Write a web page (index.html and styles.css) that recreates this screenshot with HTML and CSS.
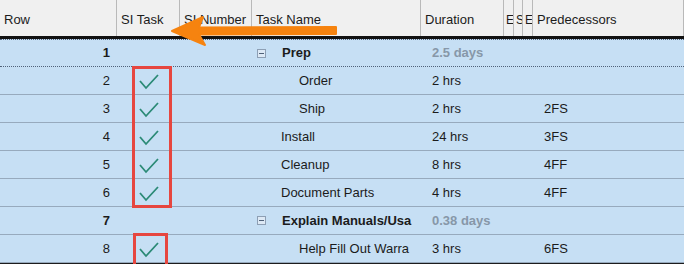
FILE: index.html
```html
<!DOCTYPE html>
<html lang="en">
<head>
    <meta charset="UTF-8">
    <title>Task Grid</title>
    <link rel="stylesheet" href="styles.css">
</head>
<body>
    <div class="sheet">
        <div class="cols head">
            <div class="cell">Row</div>
            <div class="cell">SI Task</div>
            <div class="cell">SI Number</div>
            <div class="cell">Task Name</div>
            <div class="cell">Duration</div>
            <div class="cell narrow">E</div>
            <div class="cell narrow">S</div>
            <div class="cell narrow">E</div>
            <div class="cell">Predecessors</div>
        </div>

        <div class="cols row summary first">
            <div class="cell num">1</div>
            <div class="cell"></div>
            <div class="cell"></div>
            <div class="cell name"><span class="toggle"></span>Prep</div>
            <div class="cell dur grey">2.5 days</div>
            <div class="cell"></div><div class="cell"></div><div class="cell"></div>
            <div class="cell pred"></div>
        </div>
        <div class="cols row">
            <div class="cell num">2</div>
            <div class="cell check"><svg width="22" height="18" viewBox="0 0 22 18"><polyline points="2,9 8,16 20,3"/></svg></div>
            <div class="cell"></div>
            <div class="cell name lvl2">Order</div>
            <div class="cell dur">2 hrs</div>
            <div class="cell"></div><div class="cell"></div><div class="cell"></div>
            <div class="cell pred"></div>
        </div>
        <div class="cols row">
            <div class="cell num">3</div>
            <div class="cell check"><svg width="22" height="18" viewBox="0 0 22 18"><polyline points="2,9 8,16 20,3"/></svg></div>
            <div class="cell"></div>
            <div class="cell name lvl2">Ship</div>
            <div class="cell dur">2 hrs</div>
            <div class="cell"></div><div class="cell"></div><div class="cell"></div>
            <div class="cell pred">2FS</div>
        </div>
        <div class="cols row">
            <div class="cell num">4</div>
            <div class="cell check"><svg width="22" height="18" viewBox="0 0 22 18"><polyline points="2,9 8,16 20,3"/></svg></div>
            <div class="cell"></div>
            <div class="cell name lvl1">Install</div>
            <div class="cell dur">24 hrs</div>
            <div class="cell"></div><div class="cell"></div><div class="cell"></div>
            <div class="cell pred">3FS</div>
        </div>
        <div class="cols row">
            <div class="cell num">5</div>
            <div class="cell check"><svg width="22" height="18" viewBox="0 0 22 18"><polyline points="2,9 8,16 20,3"/></svg></div>
            <div class="cell"></div>
            <div class="cell name lvl1">Cleanup</div>
            <div class="cell dur">8 hrs</div>
            <div class="cell"></div><div class="cell"></div><div class="cell"></div>
            <div class="cell pred">4FF</div>
        </div>
        <div class="cols row">
            <div class="cell num">6</div>
            <div class="cell check"><svg width="22" height="18" viewBox="0 0 22 18"><polyline points="2,9 8,16 20,3"/></svg></div>
            <div class="cell"></div>
            <div class="cell name lvl1">Document Parts</div>
            <div class="cell dur">4 hrs</div>
            <div class="cell"></div><div class="cell"></div><div class="cell"></div>
            <div class="cell pred">4FF</div>
        </div>
        <div class="cols row summary">
            <div class="cell num">7</div>
            <div class="cell"></div>
            <div class="cell"></div>
            <div class="cell name"><span class="toggle"></span>Explain Manuals/Usa</div>
            <div class="cell dur grey">0.38 days</div>
            <div class="cell"></div><div class="cell"></div><div class="cell"></div>
            <div class="cell pred"></div>
        </div>
        <div class="cols row">
            <div class="cell num">8</div>
            <div class="cell check"><svg width="22" height="18" viewBox="0 0 22 18"><polyline points="2,9 8,16 20,3"/></svg></div>
            <div class="cell"></div>
            <div class="cell name lvl2">Help Fill Out Warra</div>
            <div class="cell dur">3 hrs</div>
            <div class="cell"></div><div class="cell"></div><div class="cell"></div>
            <div class="cell pred">6FS</div>
        </div>

        <!-- annotations -->
        <div class="mark mark-big"></div>
        <div class="mark mark-small"></div>
        <svg class="arrow" width="684" height="60" viewBox="0 0 684 60">
            <path d="M172,31 L203,17 L199,27.5 L336,27 L336,34 L199,34.5 L205,45 Z"/>
        </svg>
    </div>
</body>
</html>
```

FILE: styles.css
```css
body {
    margin: 0;
    background: #1c1c1c;
    width: 684px;
    height: 264px;
    overflow: hidden;
}

.sheet {
    position: relative;
    font-family: "Liberation Sans", Arial, sans-serif;
    font-size: 13px;
    color: #1b1b1b;
}

.cols {
    display: grid;
    grid-template-columns: 117px 63px 72px 169px 83px 10px 9px 10px 151px;
}

.cell {
    box-sizing: border-box;
    white-space: nowrap;
    overflow: hidden;
}

.head {
    height: 39px;
    background: #f0f0f0;
    border-bottom: 3px solid #111;
    box-sizing: border-box;
}

.head .cell {
    border-right: 1px solid #b9b9b9;
    padding-left: 4px;
    padding-top: 2px;
    line-height: 36px;
}

.head .narrow {
    padding-left: 2px;
    font-size: 12px;
}

.row {
    height: 28px;
    box-sizing: border-box;
    background: #c6dff4;
    border-bottom: 1px solid #97aabd;
}

.row.first {
    border-top: 1px dotted #50627a;
    border-bottom: 1px dotted #50627a;
}

.row .cell {
    line-height: 27px;
}

.row.first .cell {
    line-height: 26px;
}

.num {
    text-align: right;
    padding-right: 7px;
}

.summary .num,
.summary .name {
    font-weight: bold;
}

.name {
    padding-left: 30px;
    padding-right: 4px;
    position: relative;
}

.name.lvl1 {
    padding-left: 29px;
}

.name.lvl2 {
    padding-left: 47px;
}

.toggle {
    position: absolute;
    left: 5px;
    top: 9px;
    width: 9px;
    height: 9px;
    box-sizing: border-box;
    border: 1px solid #8d9fb4;
    background: #dde9f5;
}

.toggle::after {
    content: "";
    position: absolute;
    left: 1px;
    right: 1px;
    top: 3px;
    height: 1px;
    background: #4f6178;
}

.dur {
    padding-left: 11px;
}

.dur.grey {
    color: #8797a8;
    font-weight: bold;
}

.pred {
    padding-left: 11px;
}

.check {
    display: flex;
    justify-content: center;
    align-items: center;
    padding-left: 1px;
}

.check polyline {
    fill: none;
    stroke: #2b8a76;
    stroke-width: 1.8;
}

.mark {
    position: absolute;
    border: 3px solid #e6463f;
    box-sizing: border-box;
}

.mark-big {
    left: 132px;
    top: 66px;
    width: 40px;
    height: 142px;
}

.mark-small {
    left: 133px;
    top: 233px;
    width: 35px;
    height: 40px;
}

.arrow {
    position: absolute;
    left: 0;
    top: 0;
}

.arrow path {
    fill: #f6830f;
    stroke: #f6830f;
    stroke-width: 2;
    stroke-linejoin: round;
}
```
